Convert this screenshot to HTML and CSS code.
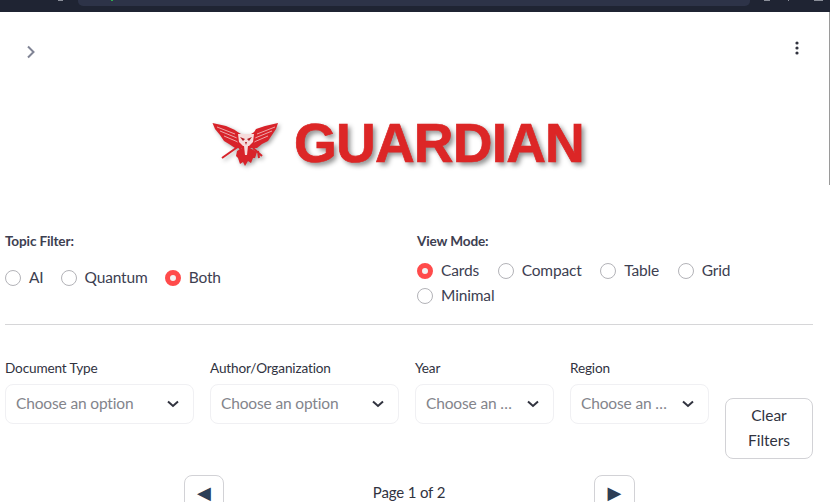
FILE: index.html
```html
<!DOCTYPE html>
<html>
<head>
    <title>Guardian</title>
    <link rel="stylesheet" href="styles.css">
</head>
<body>
    <div class="browser-bar">
        <div class="address-bar"></div>
        <span class="speck speck-reload"></span>
        <span class="speck speck-lock"></span>
        <span class="speck speck-min"></span>
        <span class="speck speck-max"></span>
        <span class="speck speck-close"></span>
    </div>
    <div class="scroll-thumb"></div>

    <div class="app-header">
        <svg class="icon-chevron" width="12" height="16" viewBox="0 0 12 16"><path d="M3 2.5 L8.5 8 L3 13.5" fill="none" stroke="#808495" stroke-width="2"/></svg>
        <svg class="icon-dots" width="4" height="14" viewBox="0 0 4 14"><circle cx="2" cy="2" r="1.6"/><circle cx="2" cy="7" r="1.6"/><circle cx="2" cy="12" r="1.6"/></svg>
    </div>

    <div class="logo">
        <svg class="eagle" width="68" height="46" viewBox="13 16 68 46">
            <path class="eagle-red" d="M13.5 17 L27 20 L36 24 L40 28 L41 33 L45 36 L44 42 L36 42 L30 38 L25 35 L21 29 L16 23 Z"/>
            <path class="eagle-red" d="M79 17 L66 20 L57 23 L54 28 L53 33 L49 36 L50 42 L58 42 L63 38 L69 35 L73 29 L77 23 Z"/>
            <path class="eagle-line" d="M18 21 L36 28 M21 25 L38 32 M25 30 L39 36 M76 21 L58 28 M73 25 L56 32 M69 30 L55 36"/>
            <path class="eagle-red" d="M37 25 L42 28 H52 L57 25 L56 35 L50 42 H44 L38 35 Z"/>
            <path class="eagle-face" d="M39 28 H55 L54 36 L49 41 H45 L40 36 Z"/>
            <path class="eagle-eyes" d="M41 31 L46 33 L44 35 Z M53 31 L48 33 L50 35 Z M46 36 H48 L47 39 Z"/>
            <path class="eagle-sword" d="M23 52 L40 40 M63 50 L54 42 M59 45 L60 52 M38 38 L42 44"/>
            <path class="eagle-red" d="M43 42 L44 40 H50 L51 42 L58 46 L56 52 L54 52 L52 57 L49 55 L46 60 L44 56 L41 58 L39 52 L37 50 L38 45 Z"/>
            <path class="eagle-face" d="M45 40 H49 L48 49 H46 Z"/>
        </svg>
        <span class="logo-text">GUARDIAN</span>
    </div>

    <div class="mode-row">
        <div class="mode-group">
            <div class="group-title">Topic Filter:</div>
            <div class="radio-list topic-list">
                <label class="radio"><span class="dot"></span>AI</label>
                <label class="radio"><span class="dot"></span>Quantum</label>
                <label class="radio"><span class="dot checked"></span>Both</label>
            </div>
        </div>
        <div class="mode-group">
            <div class="group-title">View Mode:</div>
            <div class="radio-list view-list">
                <label class="radio"><span class="dot checked"></span>Cards</label>
                <label class="radio"><span class="dot"></span>Compact</label>
                <label class="radio"><span class="dot"></span>Table</label>
                <label class="radio"><span class="dot"></span>Grid</label>
                <label class="radio"><span class="dot"></span>Minimal</label>
            </div>
        </div>
    </div>

    <hr class="divider">

    <div class="filter-row">
        <div class="filter">
            <div class="filter-label">Document Type</div>
            <div class="select"><span>Choose an option</span><svg width="12" height="8" viewBox="0 0 12 8"><path d="M1 1.5 L6 6 L11 1.5" fill="none" stroke="#31333f" stroke-width="2"/></svg></div>
        </div>
        <div class="filter">
            <div class="filter-label">Author/Organization</div>
            <div class="select"><span>Choose an option</span><svg width="12" height="8" viewBox="0 0 12 8"><path d="M1 1.5 L6 6 L11 1.5" fill="none" stroke="#31333f" stroke-width="2"/></svg></div>
        </div>
        <div class="filter">
            <div class="filter-label">Year</div>
            <div class="select"><span>Choose an …</span><svg width="12" height="8" viewBox="0 0 12 8"><path d="M1 1.5 L6 6 L11 1.5" fill="none" stroke="#31333f" stroke-width="2"/></svg></div>
        </div>
        <div class="filter">
            <div class="filter-label">Region</div>
            <div class="select"><span>Choose an …</span><svg width="12" height="8" viewBox="0 0 12 8"><path d="M1 1.5 L6 6 L11 1.5" fill="none" stroke="#31333f" stroke-width="2"/></svg></div>
        </div>
        <button class="clear-btn">Clear Filters</button>
    </div>

    <div class="pager">
        <button class="page-btn">◀</button>
        <div class="page-label">Page 1 of 2</div>
        <button class="page-btn">▶</button>
    </div>
</body>
</html>
```

FILE: styles.css
```css
html, body {
    height: 100%;
    overflow: hidden;
}
body {
    margin: 0;
    background: white;
    font-family: Lato, "Open Sans", sans-serif;
    font-size: 15.5px;
    letter-spacing: -0.15px;
    color: #31333f;
    position: relative;
}
.browser-bar {
    height: 12px;
    background: #1f2433;
    padding: 0 80px 0 78px;
}
.address-bar {
    height: 6px;
    background: #2d3348;
    border-radius: 0 0 5px 5px;
}
.speck {
    position: absolute;
    top: 0;
    height: 1px;
    background: #8a8e99;
}
.speck-reload {
    left: 58px;
    width: 5px;
}
.speck-lock {
    left: 111px;
    width: 2px;
    background: #2fae4e;
}
.speck-min {
    left: 764px;
    width: 6px;
}
.speck-max {
    left: 788px;
    width: 1px;
}
.speck-close {
    left: 814px;
    width: 9px;
}
.scroll-thumb {
    position: absolute;
    top: 12px;
    right: 0;
    width: 1px;
    height: 173px;
    background: #9a9a9a;
}
.app-header {
    height: 68px;
    display: flex;
    justify-content: space-between;
    padding: 0 31px 0 25px;
}
.icon-chevron {
    margin-top: 32px;
}
.icon-dots {
    margin-top: 29px;
    fill: #31333f;
}
.logo {
    height: 100px;
    display: flex;
    align-items: center;
    justify-content: center;
    gap: 14px;
    padding-right: 34px;
    padding-top: 6px;
    box-sizing: border-box;
    margin-top: 10px;
}
.eagle {
    margin-top: 4px;
    filter: drop-shadow(2px 2px 2px rgba(0, 0, 0, 0.35));
}
.eagle-red {
    fill: #d8232a;
}
.eagle-line {
    fill: none;
    stroke: #f3c6c8;
    stroke-width: 0.8;
}
.eagle-face {
    fill: #f6dcdc;
}
.eagle-eyes {
    fill: #b01c22;
}
.eagle-sword {
    fill: none;
    stroke: #d8232a;
    stroke-width: 2;
}
.logo-text {
    font-family: "Liberation Sans", Arial, sans-serif;
    font-weight: bold;
    font-size: 55px;
    letter-spacing: -0.8px;
    line-height: 60px;
    color: #dc2626;
    -webkit-text-stroke: 0.7px #dc2626;
    text-shadow: 3px 3px 5px rgba(0, 0, 0, 0.45);
}
.mode-row {
    display: grid;
    grid-template-columns: 396px 396px;
    column-gap: 16px;
    padding: 0 5px;
    margin-top: 42px;
    height: 92px;
}
.group-title {
    font-size: 13.6px;
    font-weight: 700;
    line-height: 20px;
    margin-top: -1px;
    color: #3d4051;
}
.radio-list {
    display: flex;
    flex-wrap: wrap;
}
.topic-list {
    margin-top: 16px;
    column-gap: 17px;
}
.view-list {
    margin-top: 9px;
    column-gap: 18.6px;
    row-gap: 4px;
    width: 340px;
}
.radio {
    display: flex;
    align-items: center;
    gap: 8px;
    line-height: 21px;
    color: #3d4051;
}
.dot {
    width: 16px;
    height: 16px;
    box-sizing: border-box;
    border: 1px solid #b3b3b8;
    border-radius: 50%;
    background: white;
}
.dot.checked {
    border: 5px solid #ff4b4b;
    background: #f3f3f3;
}
.divider {
    border: none;
    border-top: 1px solid #d6d6d8;
    margin: 0 17px 0 5px;
}
.filter-row {
    display: grid;
    grid-template-columns: 189px 189px 139px 139px 88px;
    column-gap: 16px;
    padding: 0 5px;
    margin-top: 33px;
    height: 117px;
}
.filter-label {
    font-size: 13.6px;
    line-height: 20px;
    margin-bottom: 6px;
}
.select {
    height: 40px;
    box-sizing: border-box;
    border: 1px solid #f0f0f3;
    border-radius: 8px;
    display: flex;
    align-items: center;
    justify-content: space-between;
    padding: 0 14px 0 10px;
    color: #83848b;
    white-space: nowrap;
}
.select span {
    margin-bottom: 2px;
}
.clear-btn {
    margin-top: 40px;
    height: 61px;
    padding: 0 12px 2px;
    background: white;
    border: 1px solid #d2d2d6;
    border-radius: 8px;
    font: inherit;
    line-height: 25px;
    color: #31333f;
}
.pager {
    display: grid;
    grid-template-columns: 40px 370px 41px;
    padding-left: 184px;
}
.page-label {
    text-align: center;
    line-height: 34px;
    font-size: 15px;
}
.page-btn {
    height: 44px;
    padding: 0 0 9px;
    background: white;
    border: 1px solid #d2d2d6;
    border-radius: 8px;
    font-family: "DejaVu Sans", sans-serif;
    font-size: 18px;
    line-height: 20px;
    color: #2c3e57;
}
```
